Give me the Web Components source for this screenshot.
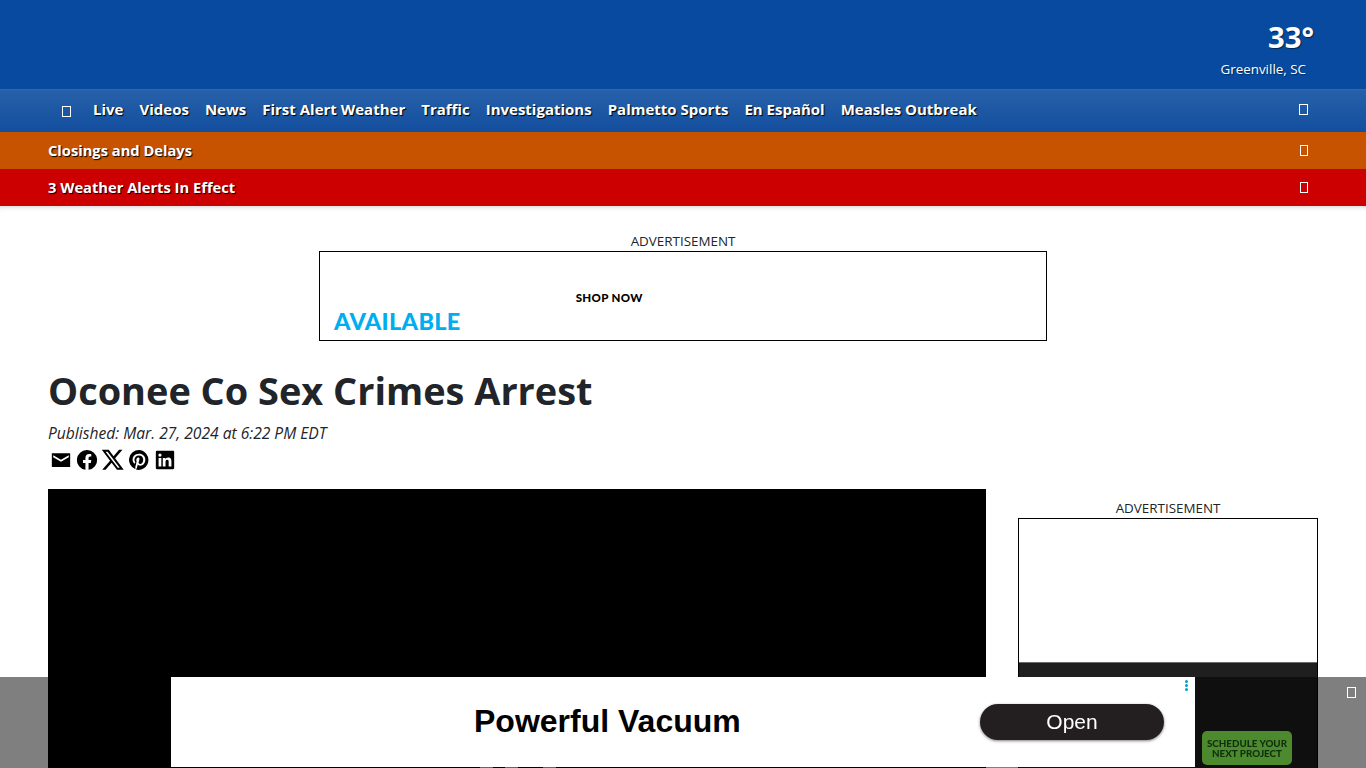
<!DOCTYPE html>
<html lang="en"><head><meta charset="utf-8"><title>Oconee Co Sex Crimes Arrest</title>
<style>
html,body{margin:0;padding:0;height:100%;overflow:hidden;background:#fff}
body{font-family:"Open Sans","Liberation Sans",sans-serif;color:#212529}
</style></head><body>
<template id="t-top"><style>
:host{display:flex;height:89px;background:#074a9f;justify-content:flex-end;color:#fff;box-sizing:border-box;padding:0 52px 0 0}
.w{display:flex;flex-direction:column;align-items:flex-end;padding-top:18px}
.t{font:700 29.300px/38px "Open Sans",sans-serif;text-shadow:1px 1px 1px rgba(0,0,0,.5)}
.c{font:400 13.400px/18px "Open Sans",sans-serif;margin:4px 8px 0 0;text-shadow:1px 1px 1px rgba(0,0,0,.4)}
</style><div class="w"><div class="t">33°</div><div class="c">Greenville, SC</div></div></template>

<template id="t-box"><style>
:host{display:inline-block;width:var(--bw,6px);height:var(--bh,9px);border:1px solid currentColor;box-sizing:content-box;flex:none}
</style></template>

<template id="t-nav"><style>
:host{display:flex;align-items:center;height:43px;box-sizing:border-box;padding:0 58px 0 62px;color:#fff;
background:linear-gradient(#2860a9,#134f9f);border-top:1px solid #2f66ac;
font:700 15px/20px "Open Sans",sans-serif;text-shadow:1px 1px 1px #000;--bw:7px}
nav{display:flex;gap:16px;align-items:center;margin-left:22px;margin-top:-4px}
.sp{flex:1}
</style><x-box></x-box><nav><slot></slot></nav><div class="sp"></div><x-box style="margin-top:-4px"></x-box></template>

<template id="t-bar"><style>
:host{display:flex;align-items:center;justify-content:space-between;box-sizing:border-box;height:37px;padding:0 58px 0 48px;color:#fff;
font:700 14.700px/20px "Open Sans",sans-serif;text-shadow:1px 1px 1px #000;background:var(--bg)}
span{margin-top:-1px}
</style><span><slot></slot></span><x-box style="text-shadow:none"></x-box></template>

<template id="t-ad"><style>
:host{display:block;text-align:center;font:400 13.400px/16px "Open Sans",sans-serif;color:#212529}
.l{height:18px}
.b{box-sizing:border-box;border:1px solid #000;background:#fff;width:var(--w);height:var(--h);margin:0 auto;overflow:hidden}
</style><div class="l">ADVERTISEMENT</div><div class="b"><slot></slot></div></template>

<template id="t-leader"><style>
:host{display:flex;flex-direction:column;height:100%;position:relative}
.row{display:flex;height:100%;box-sizing:border-box;padding:0 0 5px 14px;align-items:flex-end}
.a{font:900 23.500px/28px Lato,sans-serif;color:#00aeef;letter-spacing:.3px}
.s{font:900 11.500px/14px Lato,sans-serif;color:#000;margin:0 0 30px 115px;letter-spacing:.35px}
</style><div class="row"><div class="a">AVAILABLE</div><div class="s">SHOP NOW</div></div></template>

<template id="t-share"><style>
:host{display:flex;gap:4px;height:22px;align-items:center;margin-left:2px}
svg{width:22px;height:22px;display:block;fill:#000}
</style>
<svg viewBox="0 0 24 24"><path d="M22 4.500H2v15h20zM20.500 9 12 14 3.500 9V6.800l8.500 5 8.500-5z" fill-rule="evenodd"/></svg>
<svg viewBox="0 0 24 24"><path d="M12 1.200A10.800 10.800 0 0 0 10.300 22.700v-7.500H7.600V12h2.700V9.700c0-2.700 1.600-4.200 4-4.200 1.200 0 2.400.2 2.400.2v2.600h-1.300c-1.300 0-1.700.8-1.700 1.700V12h3l-.5 3.200h-2.500v7.500A10.800 10.800 0 0 0 12 1.200z"/></svg>
<svg viewBox="0 0 24 24"><path d="M18.600.9h3.700l-8 9.200 9.400 12.600h-7.400l-5.800-7.600-6.600 7.600H.2l8.600-9.900L-.2.900h7.600l5.200 7zM17.300 20.500h2L6.100 3H3.900z"/></svg>
<svg viewBox="0 0 24 24"><path d="M12 1.200a10.800 10.800 0 0 0-3.900 20.900c-.1-.8-.2-2.200 0-3.100l1.300-5.400s-.3-.7-.3-1.600c0-1.500.9-2.700 2-2.700.9 0 1.400.7 1.400 1.500 0 .9-.6 2.300-.9 3.600-.3 1.100.5 2 1.600 2 1.900 0 3.400-2 3.400-5 0-2.600-1.900-4.400-4.600-4.400-3.100 0-5 2.300-5 4.800 0 .9.400 1.900.8 2.500.1.100.1.200.1.300l-.3 1.200c0 .2-.2.200-.4.100-1.300-.6-2.200-2.600-2.200-4.200 0-3.400 2.500-6.600 7.200-6.600 3.800 0 6.700 2.700 6.700 6.300 0 3.800-2.400 6.800-5.700 6.800-1.100 0-2.200-.6-2.500-1.300l-.7 2.600c-.2 1-.9 2.200-1.400 2.900A10.800 10.800 0 1 0 12 1.200z"/></svg>
<svg viewBox="0 0 24 24"><path d="M20.800 2H3.200A1.200 1.200 0 0 0 2 3.200v17.600c0 .7.500 1.200 1.200 1.200h17.600c.7 0 1.200-.5 1.200-1.200V3.200c0-.7-.5-1.200-1.200-1.200zM8 19H5V9.700h3zM6.500 8.400a1.700 1.700 0 1 1 0-3.500 1.700 1.700 0 0 1 0 3.500zM19 19h-3v-4.700c0-1.200 0-2.500-1.600-2.500s-1.800 1.200-1.800 2.400V19h-3V9.700h2.800V11h.1c.4-.8 1.400-1.600 2.900-1.600 3.100 0 3.600 2 3.600 4.700z"/></svg>
</template>

<template id="t-story"><style>
:host{display:block;padding:0 48px}
h1{margin:0;font:700 37.900px/48px "Open Sans",sans-serif;color:#212529;padding-top:25px}
.p{font:italic 400 15.600px/19px "Open Sans",sans-serif;margin-top:10px;color:#212529}
.g{display:grid;grid-template-columns:938px 300px;column-gap:32px;margin-top:18px}
.v{background:#000;height:400px}
.side{padding-top:11px}
.dark{height:105px;background:#1f1f1f;margin-top:143px;margin-left:-1px;margin-right:-1px;border-top:1px solid #6a6a6a}
.inner{height:100%;display:flex;flex-direction:column;justify-content:flex-start}
</style>
<h1><slot name="title"></slot></h1>
<div class="p"><slot name="date"></slot></div>
<x-share style="margin-top:6px"></x-share>
<div class="g"><div class="v"></div><div class="side"><x-ad style="--w:300px;--h:300px"><div class="inner"><div class="dark"></div></div></x-ad></div></div>
</template>

<template id="t-anchor"><style>
:host{position:fixed;left:0;right:0;bottom:0;height:91px;background:rgba(0,0,0,.5);display:flex;justify-content:flex-start;padding-left:171px;box-sizing:border-box;--bw:7px}
.ad{width:1024px;height:90px;background:#fff;position:relative;display:flex}
.m{flex:1;display:flex;align-items:center;min-width:0;padding-bottom:3px}
.h{font:700 32px/38px "Liberation Sans",Arial,sans-serif;color:#000;margin-left:303px}
.o{width:184px;height:36px;border-radius:18px;background:#231f20;color:#fff;font:400 21px/36px "Liberation Sans",Arial,sans-serif;text-align:center;margin-left:auto;margin-right:31px;box-shadow:0 1px 3px rgba(0,0,0,.5);position:relative;top:1px}
.dots{position:absolute;left:1014px;top:3px;display:flex;flex-direction:column;gap:1px}
.dots i{display:block;width:3px;height:3px;border-radius:50%;background:#00a0c6}
.x{position:absolute;right:10px;top:10px;color:#fff}
.cta{position:absolute;left:1031px;top:54px;width:90px;height:34px;background:#4d8a2e;border-radius:5px;color:#0f2f0e;font:900 9.800px/10px Lato,sans-serif;text-align:center;display:flex;align-items:center;justify-content:center;box-sizing:border-box}
.s{position:absolute;bottom:-1px;height:1px;background:#666}
</style>
<div class="ad"><div class="m"><span class="h"><slot name="head"></slot></span><span class="o"><slot name="cta"></slot></span></div><div class="dots"><i></i><i></i><i></i></div><div class="cta">SCHEDULE YOUR<br>NEXT PROJECT</div>
<i class="s" style="left:309px;width:13px"></i><i class="s" style="left:334px;width:13px"></i><i class="s" style="left:372px;width:13px"></i></div>
<x-box class="x"></x-box>
</template>

<x-top></x-top>
<x-nav><span>Live</span><span>Videos</span><span>News</span><span>First Alert Weather</span><span>Traffic</span><span>Investigations</span><span>Palmetto Sports</span><span>En Español</span><span>Measles Outbreak</span></x-nav>
<x-bar style="--bg:#c75300">Closings and Delays</x-bar>
<x-bar style="--bg:#cc0000">3 Weather Alerts In Effect</x-bar>
<x-page>
<x-ad style="--w:728px;--h:90px;padding-top:27px"><x-leader></x-leader></x-ad>
<x-story><span slot="title">Oconee Co Sex Crimes Arrest</span><span slot="date">Published: Mar. 27, 2024 at 6:22 PM EDT</span></x-story>
</x-page>
<x-anchor><span slot="head">Powerful Vacuum</span><span slot="cta">Open</span></x-anchor>
<script>
const def=n=>customElements.define(n,class extends HTMLElement{constructor(){super();this.attachShadow({mode:'open'}).appendChild(document.getElementById('t-'+n.slice(2)).content.cloneNode(true));}});
['x-box','x-top','x-nav','x-bar','x-ad','x-leader','x-share','x-story','x-anchor'].forEach(def);
customElements.define('x-page',class extends HTMLElement{constructor(){super();this.attachShadow({mode:'open'}).innerHTML='<style>:host{display:block;box-shadow:inset 0 5px 5px -4px rgba(0,0,0,.18)}</style><slot></slot>';}});
</script>
</body></html>
